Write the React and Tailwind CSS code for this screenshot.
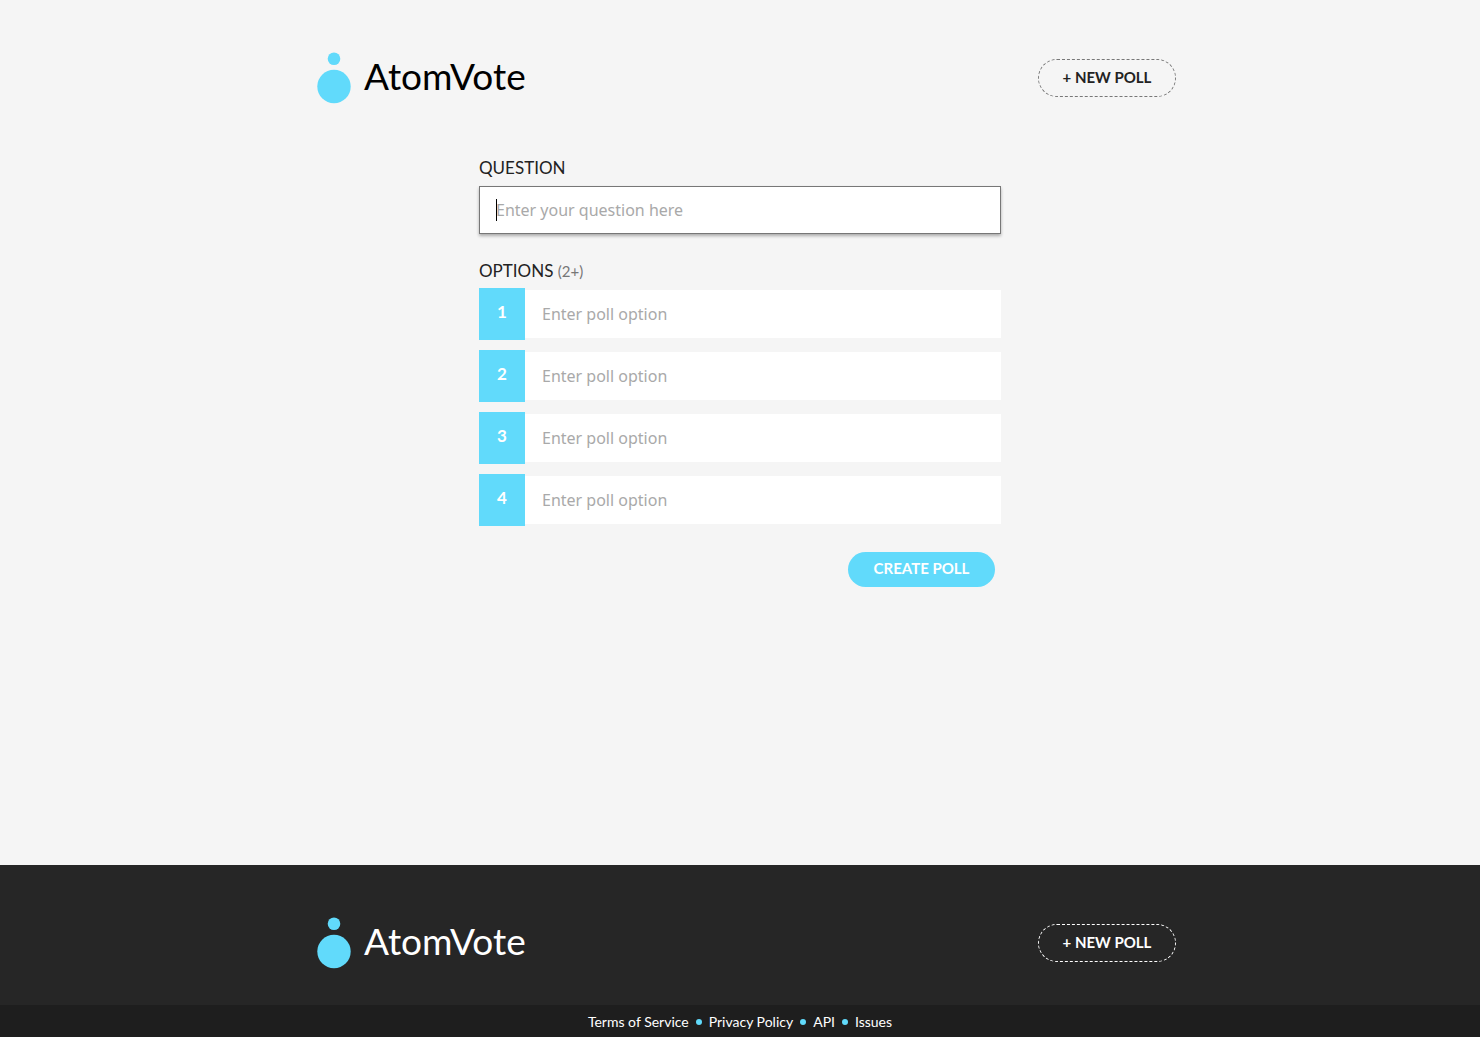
import React, { useState } from "react";

const footerLinks = ["Terms of Service", "Privacy Policy", "API", "Issues"];

function Logo({ textClass }) {
  return (
    <a href="#home" className="flex items-center gap-3">
      <svg width="36" height="54" viewBox="0 0 36 54" aria-hidden="true">
        <circle cx="18" cy="7.7" r="6.3" fill="#61dafb" />
        <circle cx="18" cy="35.5" r="16.7" fill="#61dafb" />
      </svg>
      <span className={`pb-1 text-[37px] leading-[50px] ${textClass}`}>
        AtomVote
      </span>
    </a>
  );
}

function Banner({ textClass, buttonClass }) {
  return (
    <div className="w-full max-w-[888px] mx-auto pt-[51px] pb-[35px] pl-5 pr-2 flex items-center justify-between">
      <Logo textClass={textClass} />
      <button
        type="button"
        className={`w-[138px] h-[38px] pb-[2px] rounded-full border border-dashed text-[15px] font-bold ${buttonClass}`}
      >
        + NEW POLL
      </button>
    </div>
  );
}

export default function App() {
  const [question, setQuestion] = useState("");
  const [focused, setFocused] = useState(true);
  const [options, setOptions] = useState(["", "", "", ""]);

  const updateOption = (index, value) => {
    setOptions(prev => prev.map((option, i) => (i === index ? value : option)));
  };

  const showCaret = focused && question === "";

  return (
    <div className="min-h-screen flex flex-col bg-[#f5f5f5] text-[#222] font-[Lato,sans-serif]">
      <header>
        <Banner textClass="text-black" buttonClass="border-[#777] text-[#222]" />
      </header>

      <main className="flex-1 w-full max-w-[522px] mx-auto pt-[14px]">
        <form onSubmit={(e) => e.preventDefault()}>
          <label htmlFor="question" className="block mb-1 text-[17px] leading-7">
            QUESTION
          </label>
          <div className="relative">
            <input
              id="question"
              type="text"
              autoFocus
              value={question}
              onChange={(e) => setQuestion(e.target.value)}
              onFocus={() => setFocused(true)}
              onBlur={() => setFocused(false)}
              placeholder="Enter your question here"
              className={`block w-full h-12 px-4 bg-white border border-transparent outline-none font-['Noto_Sans',sans-serif] text-base placeholder:text-[#a9a9a9] focus:border-[#777] focus:shadow-[0_2px_3px_rgba(0,0,0,0.3)] ${showCaret ? "caret-transparent" : "caret-black"}`}
            />
            {/* steady caret while the field is empty */}
            {showCaret && (
              <span className="absolute left-[17px] top-[13px] w-px h-[22px] bg-black pointer-events-none" />
            )}
          </div>

          <fieldset className="mt-6">
            <legend className="pb-1 text-[17px] leading-[26px]">
              OPTIONS <span className="text-[15px] text-[#777]">(2+)</span>
            </legend>
            <div className="flex flex-col gap-[10px]">
              {options.map((option, index) => (
                <div key={index} className="flex items-center">
                  <label
                    htmlFor={`option-${index}`}
                    className="w-[46px] h-[52px] pb-1 flex items-center justify-center bg-[#61dafb] text-white text-[17px] font-bold"
                  >
                    {index + 1}
                  </label>
                  <input
                    id={`option-${index}`}
                    type="text"
                    value={option}
                    onChange={(e) => updateOption(index, e.target.value)}
                    placeholder="Enter poll option"
                    className="flex-1 min-w-0 h-12 px-4 bg-white border border-transparent outline-none font-['Noto_Sans',sans-serif] text-base placeholder:text-[#a9a9a9] focus:border-[#777]"
                  />
                </div>
              ))}
            </div>
          </fieldset>

          <div className="flex justify-end mt-[26px] pr-[6px]">
            <button
              type="submit"
              className="w-[147px] h-[35px] pb-[2px] rounded-full bg-[#61dafb] text-white text-[15px] font-bold"
            >
              CREATE POLL
            </button>
          </div>
        </form>
      </main>

      <footer className="bg-[#262626] text-white">
        <Banner textClass="text-white" buttonClass="border-white text-white" />
        <nav className="h-8 pt-[2px] flex items-center justify-center gap-[7px] bg-[#1e1e1e] text-sm">
          {footerLinks.map((link, index) => (
            <React.Fragment key={link}>
              {index > 0 && <span className="size-[6px] rounded-full bg-[#61dafb]" />}
              <a href="#footer">{link}</a>
            </React.Fragment>
          ))}
        </nav>
      </footer>
    </div>
  );
}
